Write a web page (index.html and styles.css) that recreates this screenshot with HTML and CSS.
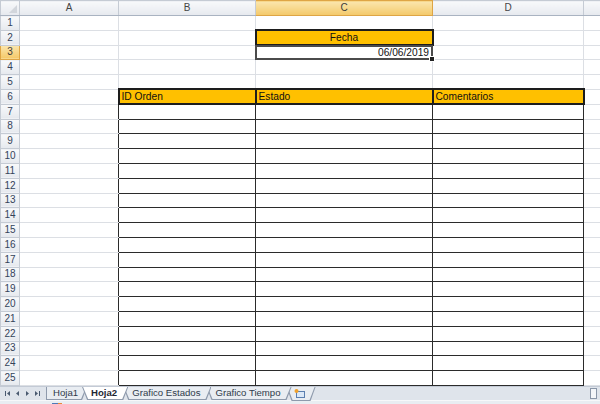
FILE: index.html
```html
<!DOCTYPE html>
<html lang="es">
<head>
    <meta charset="UTF-8">
    <title>Hoja2</title>
    <link rel="stylesheet" href="styles.css">
</head>
<body>
    <div class="book">
        <table class="grid">
            <colgroup>
                <col class="c-rh"><col class="c-a"><col class="c-b"><col class="c-c"><col class="c-d"><col class="c-e">
            </colgroup>
            <tr class="cols">
                <th class="corner"><span class="tri"></span></th><th>A</th><th>B</th><th class="sel">C</th><th>D</th><th></th>
            </tr>
            <tr><th>1</th><td></td><td></td><td></td><td></td><td></td></tr>
            <tr><th>2</th><td></td><td></td><td class="head fecha">Fecha</td><td></td><td></td></tr>
            <tr><th class="sel">3</th><td></td><td></td><td class="date">06/06/2019<span class="cursor"><span class="handle"></span></span></td><td></td><td></td></tr>
            <tr><th>4</th><td></td><td></td><td></td><td></td><td></td></tr>
            <tr><th>5</th><td></td><td></td><td></td><td></td><td></td></tr>
            <tr><th>6</th><td></td><td class="head">ID Orden</td><td class="head">Estado</td><td class="head">Comentarios</td><td></td></tr>
            <tr><th>7</th><td class="pre"></td><td class="box"></td><td class="box"></td><td class="box"></td><td></td></tr>
            <tr><th>8</th><td class="pre"></td><td class="box"></td><td class="box"></td><td class="box"></td><td></td></tr>
            <tr><th>9</th><td class="pre"></td><td class="box"></td><td class="box"></td><td class="box"></td><td></td></tr>
            <tr><th>10</th><td class="pre"></td><td class="box"></td><td class="box"></td><td class="box"></td><td></td></tr>
            <tr><th>11</th><td class="pre"></td><td class="box"></td><td class="box"></td><td class="box"></td><td></td></tr>
            <tr><th>12</th><td class="pre"></td><td class="box"></td><td class="box"></td><td class="box"></td><td></td></tr>
            <tr><th>13</th><td class="pre"></td><td class="box"></td><td class="box"></td><td class="box"></td><td></td></tr>
            <tr><th>14</th><td class="pre"></td><td class="box"></td><td class="box"></td><td class="box"></td><td></td></tr>
            <tr><th>15</th><td class="pre"></td><td class="box"></td><td class="box"></td><td class="box"></td><td></td></tr>
            <tr><th>16</th><td class="pre"></td><td class="box"></td><td class="box"></td><td class="box"></td><td></td></tr>
            <tr><th>17</th><td class="pre"></td><td class="box"></td><td class="box"></td><td class="box"></td><td></td></tr>
            <tr><th>18</th><td class="pre"></td><td class="box"></td><td class="box"></td><td class="box"></td><td></td></tr>
            <tr><th>19</th><td class="pre"></td><td class="box"></td><td class="box"></td><td class="box"></td><td></td></tr>
            <tr><th>20</th><td class="pre"></td><td class="box"></td><td class="box"></td><td class="box"></td><td></td></tr>
            <tr><th>21</th><td class="pre"></td><td class="box"></td><td class="box"></td><td class="box"></td><td></td></tr>
            <tr><th>22</th><td class="pre"></td><td class="box"></td><td class="box"></td><td class="box"></td><td></td></tr>
            <tr><th>23</th><td class="pre"></td><td class="box"></td><td class="box"></td><td class="box"></td><td></td></tr>
            <tr><th>24</th><td class="pre"></td><td class="box"></td><td class="box"></td><td class="box"></td><td></td></tr>
            <tr><th>25</th><td class="pre"></td><td class="box"></td><td class="box"></td><td class="box"></td><td></td></tr>
        </table>

        <div class="tabbar">
            <div class="nav">
                <svg width="44" height="13" viewBox="0 0 44 13">
                    <g fill="#4a5a70">
                        <rect x="5" y="4" width="1" height="5"/>
                        <path d="M10 4 L7 6.5 L10 9 Z"/>
                        <path d="M19 4 L16 6.5 L19 9 Z"/>
                        <path d="M26 4 L29 6.5 L26 9 Z"/>
                        <path d="M35 4 L38 6.5 L35 9 Z"/>
                        <rect x="39" y="4" width="1" height="5"/>
                    </g>
                </svg>
            </div>
            <div class="tabs">
                <div class="tab first">Hoja1</div>
                <div class="tab active">Hoja2</div>
                <div class="tab t3">Grafico Estados</div>
                <div class="tab t4">Grafico Tiempo</div>
                <div class="tab newtab">
                    <svg width="14" height="11" viewBox="0 0 14 11">
                        <rect x="3.5" y="3.5" width="8" height="6" fill="#dbe8f7" stroke="#5b7fb0" stroke-width="1"/>
                        <circle cx="3.5" cy="3" r="2" fill="#f0a22e"/>
                    </svg>
                </div>
            </div>
            <div class="hscroll"><span class="split"></span></div>
        </div>
        <div class="status"><span class="macro"></span></div>
    </div>
</body>
</html>
```

FILE: styles.css
```css
body {
    margin: 0;
    background: #fff;
    font-family: "Liberation Sans", Arial, sans-serif;
}
.book {
    width: 600px;
    height: 404px;
    overflow: hidden;
    display: flex;
    flex-direction: column;
}

/* sheet grid */
.grid {
    border-collapse: collapse;
    table-layout: fixed;
    width: 600px;
    font-size: 10.2px;
    color: #111;
}
.c-rh { width: 19px; }
.c-a { width: 99px; }
.c-b { width: 137px; }
.c-c { width: 177px; }
.c-d { width: 151px; }
.c-e { width: 17px; }
.grid tr { height: 14.8px; }
.grid tr.cols { height: 15px; }
.grid th {
    padding: 0;
    font-weight: normal;
    font-size: 10px;
    color: #34435a;
    background: linear-gradient(#f8f9fb, #e6e9ee);
    border: 1px solid #c5cbd4;
    text-align: center;
    line-height: 12px;
}
.cols th {
    border-bottom-color: #a9b3c1;
    color: #454545;
}
.grid th.sel {
    background: linear-gradient(#fbe6ae, #f4c969);
    border-color: #dea545;
    color: #3b3b3b;
}
.corner { position: relative; }
.corner .tri {
    position: absolute;
    right: 2px;
    bottom: 2px;
    width: 0;
    height: 0;
    border-left: 8px solid transparent;
    border-bottom: 8px solid #d2d6dc;
}
.grid td {
    padding: 0 2px;
    border: 1px solid #dcdfe4;
    white-space: nowrap;
    overflow: hidden;
    vertical-align: middle;
    line-height: 12px;
}
.grid td.head {
    background: #ffc000;
    border: 2px solid #1d1d1d;
}
.grid td.fecha { text-align: center; }
.grid td.box { border: 1px solid #2b2b2b; }
.grid td.pre { border-right-color: #2b2b2b; }
.grid td.date {
    text-align: right;
    position: relative;
    overflow: visible;
    padding-right: 3px;
}
.cursor {
    position: absolute;
    left: -1px;
    top: -1px;
    right: -1px;
    bottom: -1px;
    border: 2px solid #4b4b4b;
}
.handle {
    position: absolute;
    right: -4px;
    bottom: -4px;
    width: 4px;
    height: 4px;
    background: #222;
    border: 1px solid #fff;
}

/* sheet tabs */
.tabbar {
    height: 13px;
    display: flex;
    background: #dfe4eb;
    border-top: 1px solid #c3cad5;
    font-size: 9.6px;
}
.nav { width: 44px; flex: none; }
.tabs {
    display: flex;
    flex: none;
    margin-left: 2px;
}
.tab {
    position: relative;
    height: 13px;
    line-height: 11px;
    padding: 0 11px 0 9px;
    margin-right: -5px;
    color: #2f3a4a;
    z-index: 4;
}
.tab::before,
.tab::after {
    content: "";
    position: absolute;
    z-index: -1;
    clip-path: polygon(0 0, 100% 0, calc(100% - 5px) 100%, 5px 100%);
}
.tab::before {
    inset: 0;
    background: #8e9aac;
}
.tab::after {
    left: 1px;
    right: 1px;
    top: 0;
    bottom: 1px;
    background: #e9edf2;
}
.tab.first {
    padding: 0 9px 0 7px;
}
.tab.first::before,
.tab.first::after {
    clip-path: polygon(0 0, 100% 0, calc(100% - 5px) 100%, 0 100%);
}
.tab.active {
    z-index: 6;
    font-weight: bold;
    color: #1e2733;
}
.tab.active::after { background: #fff; }
.tab.t3 { z-index: 3; }
.tab.t4 { z-index: 2; }
.tab.newtab {
    padding: 1px 9px 0 6px;
    z-index: 1;
}
.tab.newtab svg { display: block; }
.hscroll {
    flex: 1;
    position: relative;
    margin-left: 10px;
}
.split {
    position: absolute;
    right: 3px;
    top: 1px;
    width: 5px;
    height: 9px;
    background: #f4f6f9;
    border: 1px solid #8a96a8;
}
.status {
    flex: 1;
    background: #e9edf2;
    border-top: 1px solid #f7f8fa;
    position: relative;
}
.macro {
    position: absolute;
    left: 52px;
    top: 2px;
    width: 10px;
    height: 6px;
    background: linear-gradient(90deg, #4d79b8 60%, #e9893a 60%);
}
```
